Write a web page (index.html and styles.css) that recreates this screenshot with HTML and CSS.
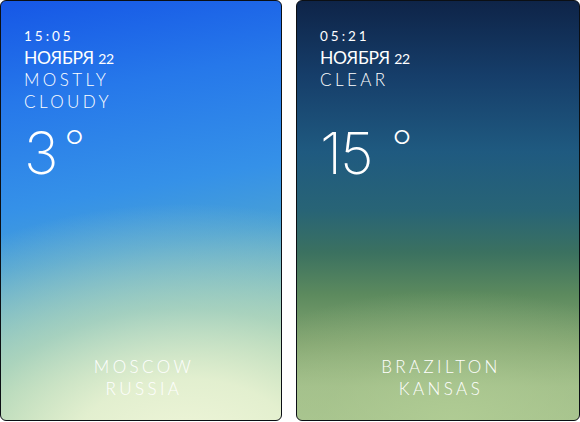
FILE: index.html
```html
<!DOCTYPE html>
<html lang="ru">
<head>
<meta charset="utf-8">
<link rel="stylesheet" href="styles.css">
</head>
<body>
<div class="screens">
  <div class="card card-moscow">
    <div class="info">
      <div class="time">15:05</div>
      <div class="date">НОЯБРЯ <span class="day">22</span></div>
      <div class="cond">MOSTLY<br>CLOUDY</div>
      <div class="temp">3<span class="deg">°</span></div>
    </div>
    <div class="city">MOSCOW<br>RUSSIA</div>
  </div>
  <div class="card card-brazilton">
    <div class="info">
      <div class="time">05:21</div>
      <div class="date">НОЯБРЯ <span class="day">22</span></div>
      <div class="cond">CLEAR</div>
      <div class="temp temp-two">15 <span class="deg">°</span></div>
    </div>
    <div class="city">BRAZILTON<br>KANSAS</div>
  </div>
</div>
</body>
</html>
```
FILE: styles.css
```css
html, body {
  margin: 0;
  padding: 0;
  background: #ffffff;
}
.screens {
  display: flex;
  gap: 14px;
  width: 580px;
  height: 422px;
}
.card {
  box-sizing: border-box;
  height: 421px;
  border: 1.5px solid #0b0f14;
  border-radius: 6px;
  display: flex;
  flex-direction: column;
  justify-content: space-between;
  color: #ffffff;
  font-family: Lato, "Open Sans", sans-serif;
  font-weight: 300;
  overflow: hidden;
}
.card-moscow {
  width: 282px;
  background:
    radial-gradient(ellipse 380px 250px at 66% 108%, rgba(240,246,218,1) 0%, rgba(232,242,210,0.92) 30%, rgba(200,226,190,0.6) 58%, rgba(160,205,190,0) 100%),
    linear-gradient(170deg, #1657e6 0%, #2678ea 22%, #3591e8 45%, #48a0d6 58%, #68b2c4 70%, #92c6b2 84%, #b0d4a8 100%);
}
.card-brazilton {
  width: 284px;
  background:
    radial-gradient(ellipse 260px 130px at 55% 100%, rgba(176,204,148,0.9) 0%, rgba(166,196,140,0.4) 50%, rgba(160,190,136,0) 100%),
    linear-gradient(180deg, #0e2448 0%, #163e6a 18%, #1f5a80 36%, #286476 50%, #3b7160 60%, #5c8a5e 70%, #84a672 82%, #a4c08c 92%, #aac590 100%);
}
.info {
  padding: 26px 0 0 23px;
}
.time {
  font-size: 13.5px;
  letter-spacing: 3px;
  line-height: 18px;
  font-weight: 400;
}
.date {
  margin-top: 3px;
  font-size: 17.5px;
  line-height: 20px;
  font-weight: 400;
  letter-spacing: -0.3px;
}
.day {
  font-size: 14px;
}
.cond {
  margin-top: 0px;
  font-size: 17px;
  line-height: 22px;
  letter-spacing: 3.4px;
}
.temp {
  margin-top: 3px;
  font-family: Inter, Lato, sans-serif;
  font-size: 58px;
  line-height: 60px;
  font-weight: 200;
}
.temp-two {
  margin-top: 25px;
  letter-spacing: -2px;
}
.deg {
  font-family: Lato, sans-serif;
  font-weight: 300;
  font-size: 48px;
  vertical-align: 10px;
  margin-left: 6px;
  letter-spacing: 0;
}
.city {
  text-align: center;
  font-size: 17px;
  line-height: 22px;
  letter-spacing: 3.4px;
  padding: 0 0 20px 6px;
}
```
